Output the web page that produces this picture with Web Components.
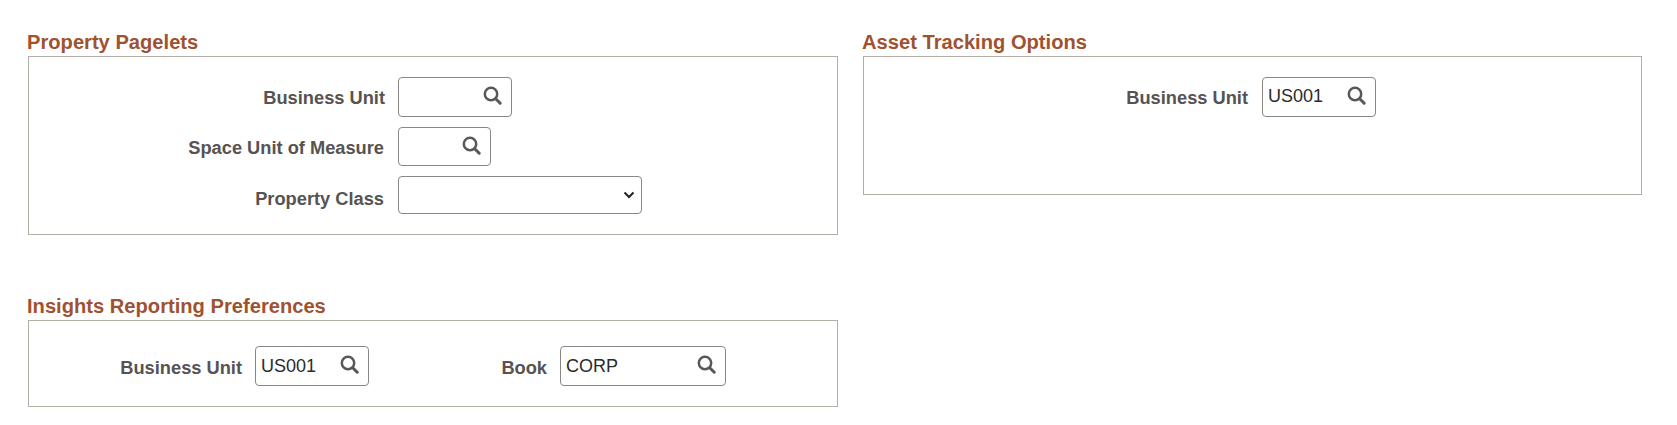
<!DOCTYPE html>
<html>
<head>
<meta charset="utf-8">
<style>
  html, body { margin: 0; background: #fff; }
  body { font-family: "Liberation Sans", Arial, sans-serif; }
  .page {
    display: grid; grid-template-columns: 811px 780px; column-gap: 24px;
    padding: 31px 0 0 27px; align-items: start;
  }
  .left { display: flex; flex-direction: column; gap: 60px; }
</style>
</head>
<body>
<div class="page">
  <div class="left">
    <group-box heading="Property Pagelets" style="--box-h:179px">
      <form-row label="Business Unit" label-w="356"><lookup-field w="114"></lookup-field></form-row>
      <form-row label="Space Unit of Measure" label-w="356" style="--row-top:10px;--label-x:-1px"><lookup-field w="93" h="39"></lookup-field></form-row>
      <form-row label="Property Class" label-w="356" style="--row-top:10px;--label-x:-1px;--label-y:4px"><select-field w="244"></select-field></form-row>
    </group-box>
    <group-box heading="Insights Reporting Preferences" style="--box-h:87px;--box-top:25px;--value-y:0px">
      <div style="display:flex">
        <form-row label="Business Unit" label-w="213" style="--label-y:2px"><lookup-field w="114" value="US001"></lookup-field></form-row>
        <form-row label="Book" label-w="178" style="--label-y:2px"><lookup-field w="166" value="CORP"></lookup-field></form-row>
      </div>
    </group-box>
  </div>
  <group-box heading="Asset Tracking Options" style="--box-h:139px">
    <form-row label="Business Unit" label-w="385" style="--label-x:-1px"><lookup-field w="114" value="US001"></lookup-field></form-row>
  </group-box>
</div>

<script>
  class GroupBox extends HTMLElement {
    constructor() {
      super();
      this.attachShadow({mode: "open"});
    }
    connectedCallback() {
      this.shadowRoot.innerHTML = `
        <style>
          :host { display: block; }
          h2 {
            margin: 0 0 2px; font: bold 20.15px/23px "Liberation Sans", Arial, sans-serif;
            color: #a05230;
          }
          .box {
            box-sizing: border-box; height: var(--box-h, auto); margin-left: 1px;
            border: 1px solid #b3aea6; padding: var(--box-top, 20px) 0 0 0;
          }
        </style>
        <h2>${this.getAttribute("heading")}</h2>
        <div class="box"><slot></slot></div>`;
    }
  }
  customElements.define("group-box", GroupBox);

  class FormRow extends HTMLElement {
    constructor() {
      super();
      this.attachShadow({mode: "open"});
    }
    connectedCallback() {
      this.shadowRoot.innerHTML = `
        <style>
          :host { display: flex; align-items: center; gap: 13px; margin-top: var(--row-top, 0); }
          label {
            width: ${this.getAttribute("label-w")}px; text-align: right;
            font: bold 18.25px/20px "Liberation Sans", Arial, sans-serif; color: #565352;
            position: relative; top: var(--label-y, 1px); left: var(--label-x, 0); white-space: nowrap;
          }
        </style>
        <label>${this.getAttribute("label")}</label>
        <slot></slot>`;
    }
  }
  customElements.define("form-row", FormRow);

  class LookupField extends HTMLElement {
    constructor() {
      super();
      this.attachShadow({mode: "open"});
    }
    connectedCallback() {
      const w = this.getAttribute("w"), h = this.getAttribute("h") || 40;
      this.shadowRoot.innerHTML = `
        <style>
          :host {
            display: flex; align-items: center; justify-content: space-between; box-sizing: border-box;
            width: ${w}px; height: ${h}px; border: 1px solid #8a8783; border-radius: 4px;
            padding: 0 9px 0 5px; background: #fff;
          }
          span { font: 18px/20px "Liberation Sans", Arial, sans-serif; color: #2b2b2b; position: relative; top: var(--value-y, -1px); }
          svg { display: block; margin-top: -3px; }
        </style>
        <span>${this.getAttribute("value") || ""}</span>
        <svg width="19" height="19" viewBox="0 0 19 19" fill="none" stroke="#5a5755">
          <circle cx="8" cy="8" r="6.2" stroke-width="2.5"/>
          <path d="M12.7 12.7 L17.2 17.2" stroke-width="3" stroke-linecap="round"/>
        </svg>`;
    }
  }
  customElements.define("lookup-field", LookupField);

  class SelectField extends HTMLElement {
    constructor() {
      super();
      this.attachShadow({mode: "open"});
    }
    connectedCallback() {
      this.shadowRoot.innerHTML = `
        <style>
          :host {
            display: flex; align-items: center; justify-content: flex-end; box-sizing: border-box;
            width: ${this.getAttribute("w")}px; height: 38px; border: 1px solid #8a8783; border-radius: 4px;
            padding: 0 6px 0 0; background: #fff;
          }
          svg { display: block; }
        </style>
        <svg width="12" height="8" viewBox="0 0 12 8" fill="none" stroke="#222" stroke-width="2">
          <path d="M1.5 1.5 L6 6 L10.5 1.5"/>
        </svg>`;
    }
  }
  customElements.define("select-field", SelectField);
</script>
</body>
</html>
